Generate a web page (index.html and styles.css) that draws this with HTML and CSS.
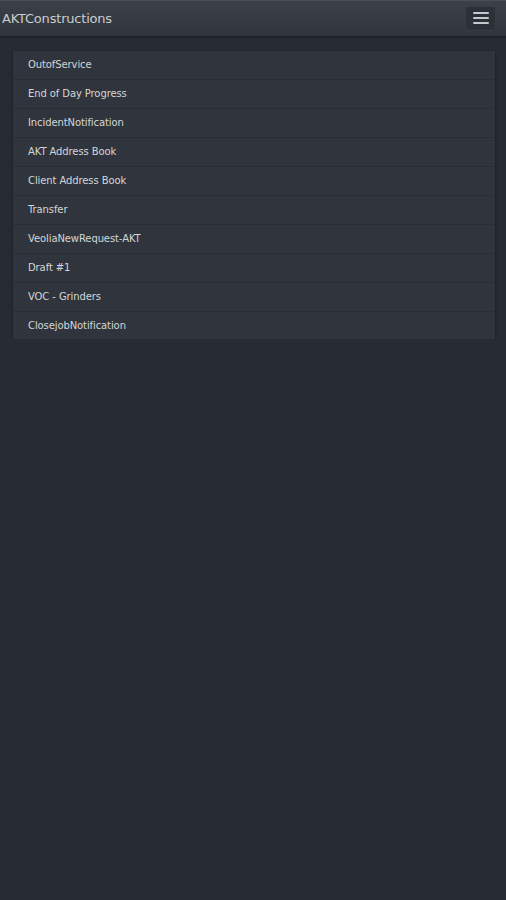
FILE: index.html
```html
<!DOCTYPE html>
<html>
<head>
<meta charset="utf-8">
<link rel="stylesheet" href="styles.css">
</head>
<body>
<header class="navbar">
  <span class="brand">AKTConstructions</span>
  <button class="toggle" aria-label="menu">
    <span class="bar"></span><span class="bar"></span><span class="bar"></span>
  </button>
</header>
<main class="content">
  <ul class="list">
    <li class="item">OutofService</li>
    <li class="item">End of Day Progress</li>
    <li class="item">IncidentNotification</li>
    <li class="item">AKT Address Book</li>
    <li class="item">Client Address Book</li>
    <li class="item">Transfer</li>
    <li class="item">VeoliaNewRequest-AKT</li>
    <li class="item">Draft #1</li>
    <li class="item">VOC - Grinders</li>
    <li class="item">ClosejobNotification</li>
  </ul>
</main>
</body>
</html>
```
FILE: styles.css
```css
html, body {
  margin: 0;
  padding: 0;
  background: #272b32;
  font-family: "DejaVu Sans", "Open Sans", sans-serif;
  color: #d6d8db;
}
.navbar {
  height: 36px;
  box-sizing: border-box;
  display: flex;
  align-items: center;
  justify-content: space-between;
  padding: 0 10px 0 2px;
  background: linear-gradient(#3c4148, #30343b);
  border-top: 1px solid #4a4f56;
  box-shadow: 0 1px 2px rgba(0,0,0,0.4);
}
.brand {
  font-size: 13px;
  color: #c9ccd0;
  letter-spacing: -0.2px;
  margin-top: -1px;
}
.toggle {
  width: 31px;
  height: 25px;
  margin-top: -1px;
  background: #2c3037;
  border: 1px solid #383d44;
  border-radius: 3px;
  display: flex;
  flex-direction: column;
  align-items: center;
  justify-content: center;
  gap: 3px;
  padding: 0;
}
.bar {
  display: block;
  width: 16px;
  height: 2px;
  background: #c5c8cc;
  border-radius: 1px;
}
.content {
  padding: 15px 11px 0 13px;
}
.list {
  list-style: none;
  margin: 0;
  padding: 0;
  background: #30353d;
  box-shadow: 0 1px 3px rgba(0,0,0,0.35);
}
.item {
  height: 28px;
  line-height: 27px;
  padding-left: 15px;
  font-size: 10px;
  letter-spacing: -0.1px;
  color: #d3d5d8;
  border-bottom: 1px solid #292d34;
}
.item:last-child {
  height: 27px;
  border-bottom: none;
}
```
